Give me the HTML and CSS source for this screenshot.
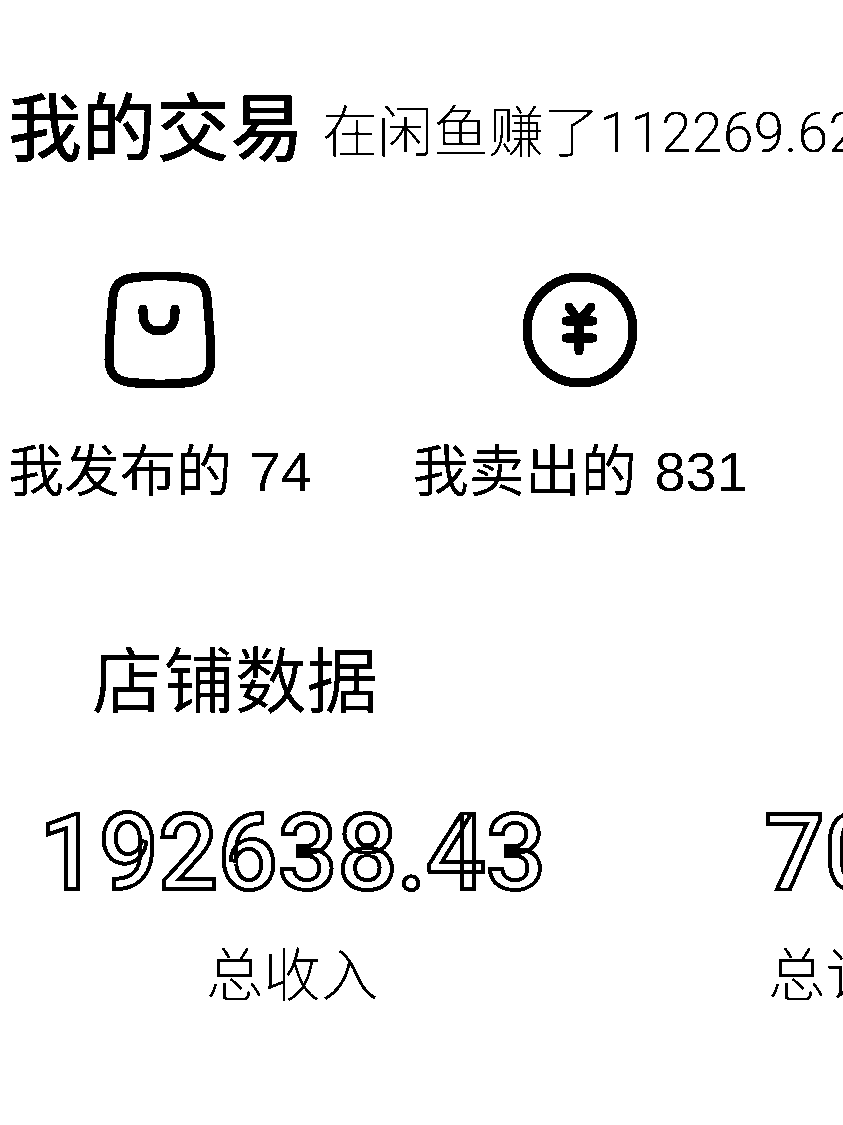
FILE: index.html
```html
<!DOCTYPE html>
<html lang="zh-CN">
<head>
  <meta charset="UTF-8" />
  <title>我的交易</title>
  <link rel="stylesheet" href="styles.css">
</head>
<body>

  <!-- hard black/white threshold, the screenshot has no greys -->
  <svg class="defs" width="0" height="0">
    <filter id="mono" color-interpolation-filters="sRGB">
      <feComponentTransfer>
        <feFuncR type="discrete" tableValues="0 1" />
        <feFuncG type="discrete" tableValues="0 1" />
        <feFuncB type="discrete" tableValues="0 1" />
      </feComponentTransfer>
    </filter>
  </svg>

  <main class="page">
    <section class="trade">
      <div class="trade-head">
        <h2>我的交易</h2>
        <span class="earned">在闲鱼赚了<span class="earned-num">112269.62</span></span>
      </div>
      <div class="trade-links">
        <div class="trade-link">
          <svg class="icon-bag" viewBox="0 0 112 116" fill="none" stroke="#000" stroke-width="9" stroke-linecap="round">
            <path d="M28 6 C46 3 66 3 84 6 C96 8 102 13 103 25 C105 47 107 69 107 88 C107 102 100 108 88 110 C66 113 46 113 24 110 C12 108 5 102 5 88 C5 69 7 47 9 25 C10 13 16 8 28 6 Z" />
            <path d="M39 37 V42 C39 53 45 59 55 59 C65 59 71 53 71 42 V37" />
          </svg>
          <span>我发布的 74</span>
        </div>
        <div class="trade-link">
          <svg class="icon-yen" viewBox="0 0 116 116" fill="none" stroke="#000" stroke-width="9" stroke-linecap="round">
            <circle cx="58" cy="58" r="53" />
            <path d="M47 35 L57 49 L69 35 M44 49 H71 M44 66 H71 M57 49 V79" />
          </svg>
          <span>我卖出的 831</span>
        </div>
      </div>
    </section>

    <section class="shop">
      <h2>店铺数据</h2>
      <div class="shop-stats">
        <div class="stat">
          <div class="stat-num">192638.43</div>
          <div class="stat-label">总收入</div>
        </div>
        <div class="stat">
          <div class="stat-num">708</div>
          <div class="stat-label">总订单</div>
        </div>
      </div>
    </section>
  </main>

</body>
</html>
```

FILE: styles.css
```css
html, body {
  margin: 0;
  padding: 0;
}

body {
  background: #fff;
  color: #000;
  font-family: "Liberation Sans", "Noto Sans CJK SC", sans-serif;
}

.defs {
  display: block;
}

.page {
  width: 843px;
  height: 1125px;
  overflow: hidden;
  background: #fff;
  filter: url(#mono);
}

h2 {
  margin: 0;
  font-weight: 400;
}

/* My trades */
.trade {
  padding: 76px 0 0 8px;
}

.trade-head {
  display: flex;
  align-items: flex-start;
  gap: 18px;
  white-space: nowrap;
  height: 98px;
}

.trade-head h2 {
  font-family: "Noto Sans CJK SC", sans-serif;
  font-size: 74px;
  font-weight: 500;
  line-height: 94px;
}

.earned {
  margin-top: 12px;
  font-family: "Noto Sans CJK SC", sans-serif;
  font-size: 55.5px;
  line-height: 80px;
  font-weight: 300;
}

.earned-num {
  font-family: Roboto, sans-serif;
}

.trade-links {
  display: flex;
  gap: 101px;
  margin-top: 98px;
}

.trade-link {
  display: flex;
  flex-direction: column;
  align-items: center;
  gap: 51px;
  font-size: 56px;
  line-height: 66px;
  word-spacing: 2px;
  white-space: nowrap;
}

.icon-bag {
  width: 112px;
  height: 116px;
  display: block;
}

.icon-yen {
  width: 116px;
  height: 116px;
  display: block;
}

/* Shop data */
.shop {
  margin-top: 132px;
}

.shop h2 {
  padding-left: 92px;
  font-size: 71.5px;
  line-height: 90px;
}

.shop-stats {
  display: flex;
  gap: 219px;
  margin-top: 71px;
  padding-left: 39px;
}

.stat {
  display: flex;
  flex-direction: column;
  align-items: center;
  flex-shrink: 0;
}

.stat-num {
  font-family: Roboto, sans-serif;
  font-size: 105px;
  font-weight: 500;
  line-height: 112px;
  color: transparent;
  -webkit-text-stroke: 4px #000;
  white-space: nowrap;
}

.stat-label {
  margin-top: 31px;
  font-size: 57.5px;
  line-height: 70px;
  font-weight: 300;
  white-space: nowrap;
}
```
